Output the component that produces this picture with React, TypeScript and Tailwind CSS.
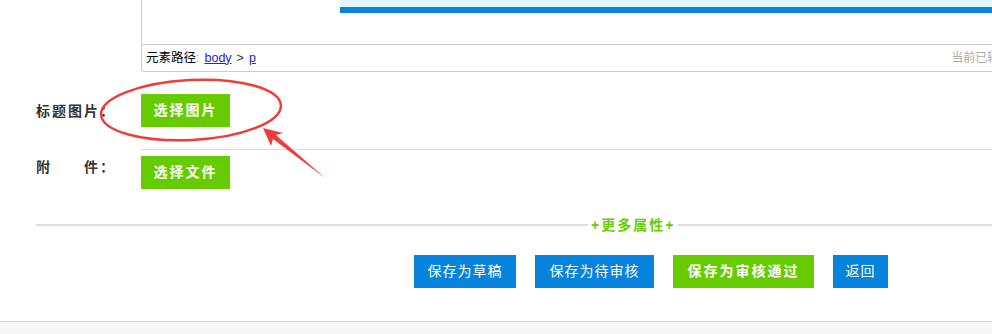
import React from "react";

const blueBtn =
  "h-[33px] bg-[#0583dd] text-white text-[14px] tracking-[1px] flex items-center justify-center";

export default function App() {
  return (
    <div className="relative w-[992px] h-[334px] overflow-hidden bg-white flex flex-col font-['Liberation_Sans','Noto_Sans_CJK_SC',sans-serif]">
      {/* editor */}
      <div className="flex pl-[36px]">
        <div className="w-[105px] shrink-0" />
        <div className="w-[920px] shrink-0 border border-t-0 border-[#cccccc] rounded-bl-[3px]">
          <div className="h-[45px] border-b border-[#cccccc]">
            <div className="ml-[198px] h-[7px] bg-[#e3f5fe]" />
            <div className="ml-[198px] h-[6px] bg-[#0583dd]" />
          </div>
          <div className="h-[26px] flex items-center pl-[4px] pr-[6px] text-[12.5px]">
            <span className="text-black">元素路径</span>
            <span className="text-[#c08a2a]">:</span>
            <a className="ml-[5px] text-[#2020ee] underline">body</a>
            <span className="mx-[5px] text-[#333]">&gt;</span>
            <a className="text-[#2020ee] underline">p</a>
            <span className="ml-auto text-[12px] text-[#aaaaaa] whitespace-nowrap">当前已输入0个字符</span>
          </div>
        </div>
      </div>

      {/* 标题图片 */}
      <div className="flex pl-[36px]">
        <div className="w-[105px] shrink-0 flex items-center text-[14px] font-bold tracking-[2px] text-[#333]">
          标题图片：
        </div>
        <div className="flex-1 pt-[22px] pb-[22px] border-b border-[#dddddd]">
          <button className="w-[89px] h-[33px] bg-[#66cc00] text-white text-[14px] font-bold tracking-[2px]">
            选择图片
          </button>
        </div>
      </div>

      {/* 附件 */}
      <div className="flex pl-[36px]">
        <div className="w-[105px] shrink-0 pt-[7px] leading-[20px] text-[14px] font-bold tracking-[2px] text-[#333]">
          附　　件：
        </div>
        <div className="flex-1 pt-[6px]">
          <button className="w-[89px] h-[33px] bg-[#66cc00] text-white text-[14px] font-bold tracking-[2px]">
            选择文件
          </button>
        </div>
      </div>

      {/* more attributes */}
      <div className="mt-[26px] h-[20px] flex items-center pl-[36px]">
        <div className="w-[552px] h-[2px] bg-[#dddddd]" />
        <span className="px-[3px] text-[14px] font-bold tracking-[2px] text-[#66cc00] whitespace-nowrap">
          +更多属性+
        </span>
        <div className="flex-1 h-[2px] bg-[#dddddd]" />
      </div>

      {/* actions */}
      <div className="mt-[20px] flex gap-[19px] pl-[414px]">
        <button className={`${blueBtn} w-[102px]`}>保存为草稿</button>
        <button className={`${blueBtn} w-[119px]`}>保存为待审核</button>
        <button className="w-[141px] h-[33px] bg-[#66cc00] text-white text-[14px] font-bold tracking-[2px]">
          保存为审核通过
        </button>
        <button className={`${blueBtn} w-[55px]`}>返回</button>
      </div>

      <div className="mt-[33px] flex-1 border-t border-[#d5d5d5] bg-[#f7f7f7]" />

      {/* annotation */}
      <svg
        className="absolute inset-0 pointer-events-none"
        width="992"
        height="334"
        viewBox="0 0 992 334"
      >
        <ellipse
          cx="191"
          cy="110"
          rx="90"
          ry="30"
          fill="none"
          stroke="#f23c3c"
          strokeWidth="2.5"
          transform="rotate(-3 191 110)"
        />
        <polygon
          points="263,128 283,133 276,135 325,178 273,139 271,146"
          fill="#f23c3c"
        />
      </svg>
    </div>
  );
}
